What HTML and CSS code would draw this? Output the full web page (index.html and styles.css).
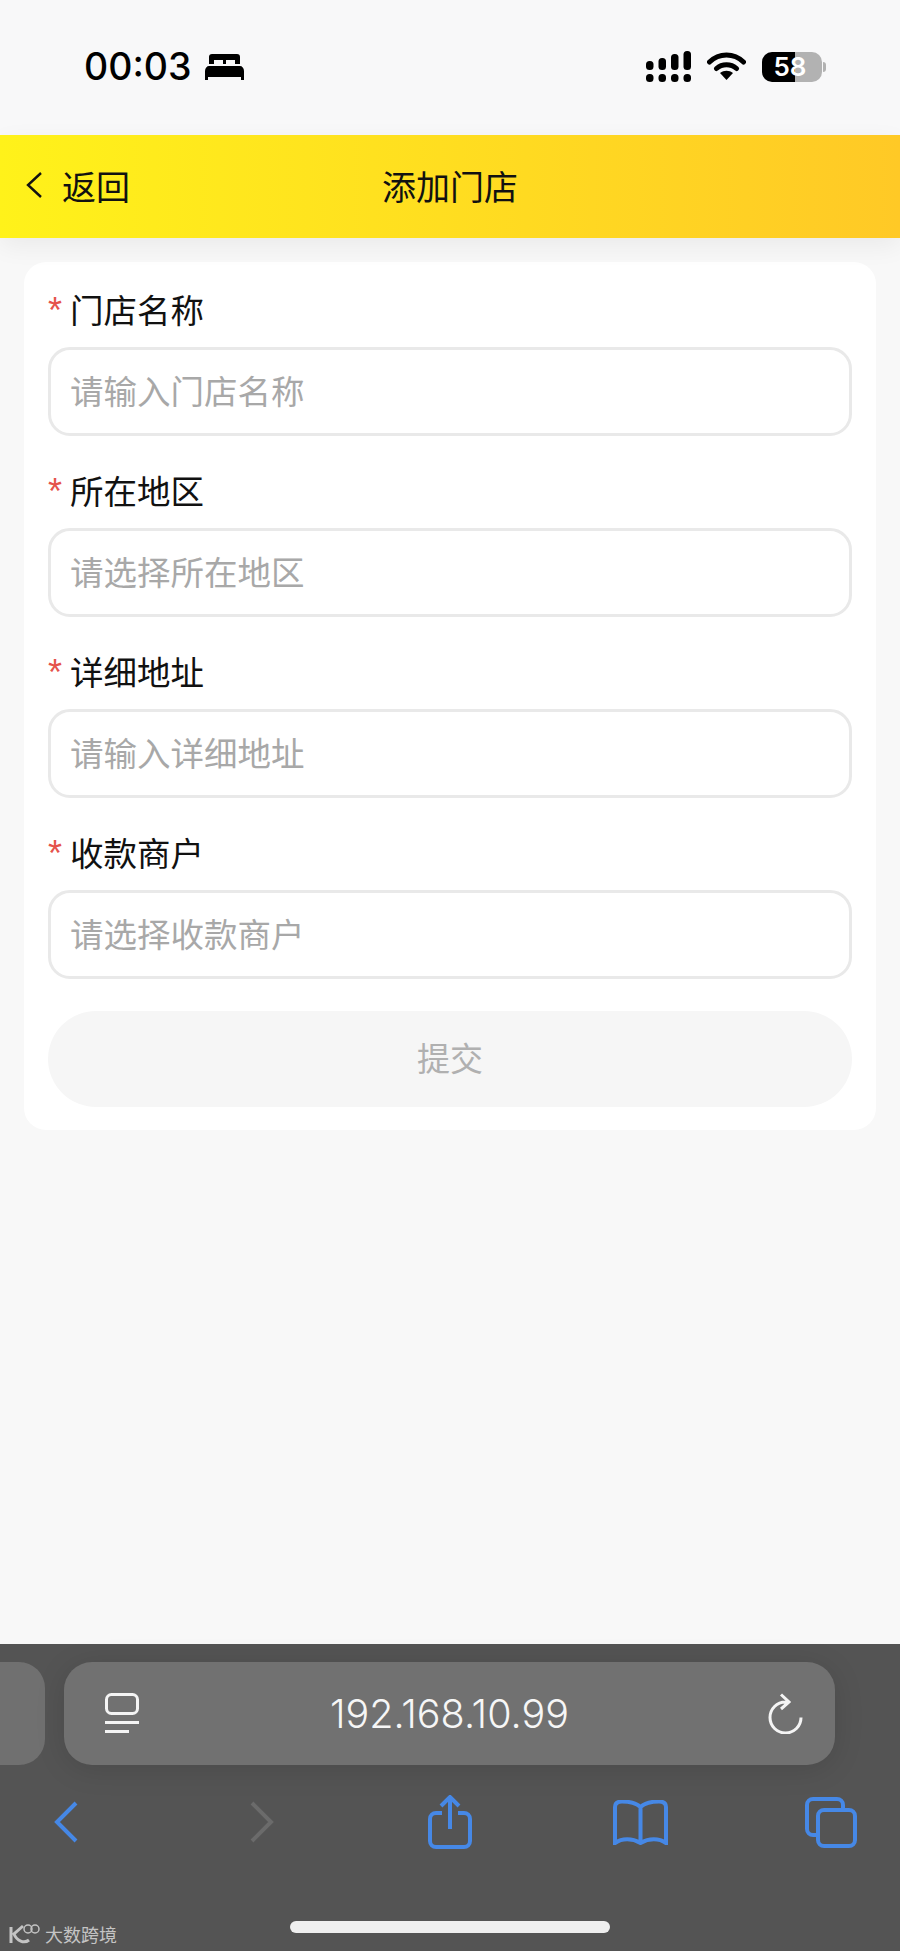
FILE: index.html
```html
<!DOCTYPE html>
<html lang="zh-CN">
<head>
  <meta charset="UTF-8" />
  <meta name="viewport" content="width=device-width, initial-scale=1.0" />
  <title>添加门店</title>
  <link rel="stylesheet" href="styles.css">
</head>
<body>
  <div class="page">
    <!-- status bar -->
    <div class="status">
      <div class="status-left">
        <span class="clock">00:03</span>
        <svg class="bed" width="39" height="26" viewBox="0 0 39 26"><path d="M4 10V3a3 3 0 0 1 3-3h25a3 3 0 0 1 3 3v7h-5V6h-9v4h-3V6H9v4zM0 17c0-3 2-5 4-5h31c2 0 4 2 4 5v9h-3v-3H3v3H0z"/></svg>
      </div>
      <div class="status-right">
        <svg width="45" height="32" viewBox="0 0 45 32"><rect x="0" y="10" width="7.500" height="9" rx="3.500"/><rect x="12.500" y="7" width="7.500" height="12" rx="3.500"/><rect x="25" y="3" width="7.500" height="16" rx="3.500"/><rect x="37.500" y="0" width="7.500" height="19" rx="3.500"/><rect x="0" y="23" width="7.500" height="8" rx="3.500"/><rect x="12.500" y="23" width="7.500" height="8" rx="3.500"/><rect x="25" y="23" width="7.500" height="8" rx="3.500"/><rect x="37.500" y="23" width="7.500" height="8" rx="3.500"/></svg>
        <svg width="39" height="29" viewBox="0 0 39 29"><path d="M2.500 11C12 1.500 27 1.500 36.500 11M9.500 17.500C15 12.500 24 12.500 29.500 17.500" fill="none" stroke="#000" stroke-width="5" stroke-linecap="round"/><path d="M19.500 29L13 22c4-3 9-3 13 0z"/></svg>
        <div class="battery"><span>58</span></div>
      </div>
    </div>

    <!-- header -->
    <div class="header">
      <div class="back">
        <svg width="18" height="28" viewBox="0 0 18 28"><path d="M16 2L3 14l13 12" fill="none" stroke="#111" stroke-width="2.400"/></svg>
        <span>返回</span>
      </div>
      <div class="title">添加门店</div>
    </div>

    <!-- form -->
    <div class="main">
      <div class="card">
        <div class="field">
          <div class="label"><span class="star">*</span>门店名称</div>
          <div class="input">请输入门店名称</div>
        </div>
        <div class="field">
          <div class="label"><span class="star">*</span>所在地区</div>
          <div class="input">请选择所在地区</div>
        </div>
        <div class="field">
          <div class="label"><span class="star">*</span>详细地址</div>
          <div class="input">请输入详细地址</div>
        </div>
        <div class="field">
          <div class="label"><span class="star">*</span>收款商户</div>
          <div class="input">请选择收款商户</div>
        </div>
        <button class="submit">提交</button>
      </div>
    </div>

    <!-- safari toolbar -->
    <div class="toolbar">
      <div class="url-row">
        <div class="tab-stub"></div>
        <div class="url-bar">
          <svg class="reader" width="34" height="41" viewBox="0 0 34 41"><rect x="1.500" y="1.500" width="31" height="19" rx="5"/><path d="M0 29.500h34M0 38.500h24"/></svg>
          <span class="url">192.168.10.99</span>
          <svg class="reload" width="35" height="41" viewBox="0 0 35 41"><path d="M33 24.500A15.500 15.500 0 1 1 17.500 9H21M13 1.500L21 9l-8 7"/></svg>
        </div>
      </div>
      <div class="nav">
        <svg class="nav-back" width="24" height="42" viewBox="0 0 24 42"><path d="M22 2L3 21l19 19"/></svg>
        <svg class="nav-forward" width="24" height="42" viewBox="0 0 24 42"><path d="M2 2l19 19L2 40"/></svg>
        <svg class="nav-share" width="44" height="54" viewBox="0 0 44 54"><path d="M14 18H8a6 6 0 0 0-6 6v22a6 6 0 0 0 6 6h28a6 6 0 0 0 6-6V24a6 6 0 0 0-6-6h-6M22 3v31M13 11l9-9 9 9"/></svg>
        <svg class="nav-book" width="55" height="45" viewBox="0 0 55 45"><path d="M27.500 7C23 3 16 1.500 9 1.500 5 1.500 2 3 2 7v36c7-5 17-5 25.500 0 8.500-5 18.500-5 25.500 0V7c0-4-3-5.500-7-5.500C39 1.500 32 3 27.500 7zM27.500 7v36"/></svg>
        <svg class="nav-tabs" width="52" height="51" viewBox="0 0 52 51"><rect x="13" y="13" width="37" height="36" rx="6"/><path d="M38 13V8a6 6 0 0 0-6-6H8a6 6 0 0 0-6 6v24a6 6 0 0 0 6 6h5"/></svg>
      </div>
      <div class="home-bar"></div>
      <div class="watermark">
        <svg width="32" height="22" viewBox="0 0 32 22"><path d="M3 4v16M15 3l-9 8c3 7 10 10 15 6" fill="none" stroke="currentColor" stroke-width="3"/><circle cx="20" cy="6" r="4" fill="none" stroke="currentColor" stroke-width="1.500"/><circle cx="27" cy="6" r="4" fill="none" stroke="currentColor" stroke-width="1.500"/></svg>
        <span>大数跨境</span>
      </div>
    </div>
  </div>
</body>
</html>
```

FILE: styles.css
```css
* { margin: 0; padding: 0; box-sizing: border-box; }
html, body { width: 100%; height: 100%; background: #f8f8f8; }
body { font-family: "Noto Sans CJK SC", "Liberation Sans", sans-serif; color: #111; }

.page { width: 900px; height: 1951px; display: flex; flex-direction: column; position: relative; overflow: hidden; }

/* status bar */
.status { height: 135px; flex: none; display: flex; justify-content: space-between; padding: 51px 78px 0 84px; background: #f8f8f9; }
.status-left { display: flex; align-items: flex-start; gap: 13px; }
.clock { font-family: Inter, "Liberation Sans", sans-serif; font-size: 37.500px; font-weight: 500; line-height: 32px; color: #000; }
.bed { margin-top: 3px; }
.status-right { display: flex; align-items: flex-start; gap: 16px; }
.battery {
  width: 60px; height: 30px; margin-top: 1px; padding-right: 4px; border-radius: 10px; position: relative;
  background: linear-gradient(90deg, #000 0, #000 33px, #b2b2b2 33px);
  display: flex; align-items: center; justify-content: center;
  color: #fff; font: 600 26px/30px Inter, "Liberation Sans", sans-serif;
}
.battery::after {
  content: ""; position: absolute; left: 61px; top: 10px;
  width: 3px; height: 10px; border-radius: 0 3px 3px 0; background: #b2b2b2;
}

/* header */
.header {
  height: 103px; flex: none; display: grid; grid-template-columns: 1fr auto 1fr; align-items: center;
  padding-bottom: 2px;
  background: linear-gradient(90deg, #fff21a, #ffc926);
  box-shadow: 0 8px 24px rgba(0,0,0,0.06);
  font-size: 34px; position: relative;
}
.back { display: flex; align-items: center; gap: 19px; padding-left: 25px; }
.back svg { margin-top: -2px; }
.title { grid-column: 2; }

/* form card */
.main { flex: 1; padding: 24px 24px 0; }
.card { background: #fff; border-radius: 22px; padding: 25px 24px 23px; }
.field { margin-bottom: 32px; }
.label { height: 48px; margin-bottom: 12px; padding-bottom: 6px; display: flex; align-items: center; font-size: 33.500px; color: #111; }
.star { width: 22px; margin-top: 6px; font: 36px/1 "Liberation Sans", sans-serif; color: #e5534b; }
.input {
  height: 89px; padding: 0 0 4px 19px; display: flex; align-items: center;
  background: #fff; border: 3px solid #e9e9e9; border-radius: 22px;
  font-size: 33.500px; color: #a8a8a8;
}
.submit {
  display: block; width: 100%; height: 96px; padding-bottom: 4px; border: none; border-radius: 48px;
  background: #f6f6f6; color: #b0b0b0; font-family: inherit; font-size: 33px;
}

/* safari toolbar */
.toolbar { height: 307px; flex: none; background: #545454; position: relative; }
.url-row { display: flex; gap: 19px; padding-top: 18px; }
.tab-stub { width: 45px; height: 103px; background: #707070; border-radius: 0 26px 26px 0; }
.url-bar {
  width: 771px; height: 103px; padding: 0 32px; background: #717171; border-radius: 28px;
  display: grid; grid-template-columns: 1fr auto 1fr; align-items: center;
  box-shadow: 0 4px 30px rgba(0,0,0,0.12);
}
.url { padding-top: 2px; font: 300 39.500px/1 Inter, "Liberation Sans", sans-serif; color: #f6f6f6; }
.reader { margin-left: 9px; }
.reader, .reload { fill: none; stroke: #f4f4f4; stroke-width: 3; }
.reload { justify-self: end; }

.nav { display: flex; align-items: center; height: 54px; margin-top: 30px; padding-left: 54px; }
.nav svg { flex: none; fill: none; stroke: #4688e6; stroke-width: 4; }
.nav-forward { margin-left: 172px; }
.nav .nav-forward { stroke: #6b6b6b; }
.nav-share { margin-left: 154px; }
.nav-book { margin-left: 141px; }
.nav-tabs { margin-left: 137px; }

.home-bar { width: 320px; height: 12px; margin: 72px auto 0; border-radius: 6px; background: #efefef; }

.watermark {
  position: absolute; left: 8px; top: 279px;
  display: flex; align-items: center; gap: 5px;
  color: #c4c4c4; font-size: 18px; line-height: 22px;
}
```
